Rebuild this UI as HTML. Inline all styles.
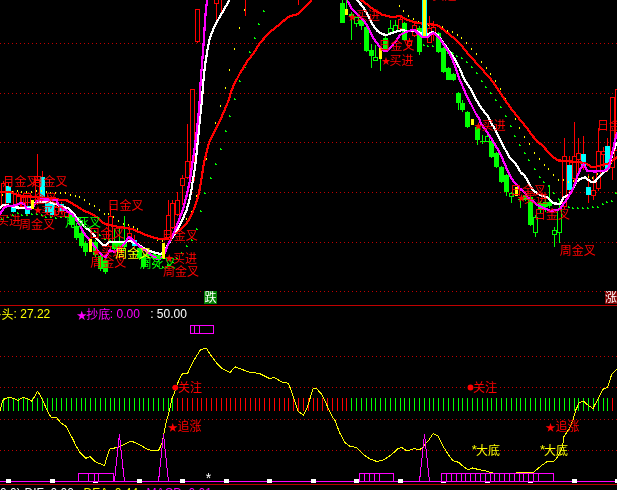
<!DOCTYPE html>
<html lang="zh-CN"><head><meta charset="utf-8"><title>K线图</title>
<style>
html,body{margin:0;padding:0;background:#000;overflow:hidden}
svg{display:block;will-change:transform}
text{white-space:pre}
</style></head>
<body>
<svg width="617" height="490" viewBox="0 0 617 490">
<rect width="617" height="490" fill="#000"/>
<g shape-rendering="crispEdges">
<line x1="0" y1="43.5" x2="362" y2="43.5" stroke="#c00000" stroke-width="1" stroke-dasharray="1 3"/>
<line x1="444" y1="43.5" x2="617" y2="43.5" stroke="#c00000" stroke-width="1" stroke-dasharray="1 3"/>
<line x1="0" y1="93.5" x2="617" y2="93.5" stroke="#c00000" stroke-width="1" stroke-dasharray="1 3"/>
<line x1="0" y1="142.5" x2="617" y2="142.5" stroke="#c00000" stroke-width="1" stroke-dasharray="1 3"/>
<line x1="0" y1="192.5" x2="617" y2="192.5" stroke="#c00000" stroke-width="1" stroke-dasharray="1 3"/>
<line x1="0" y1="242.5" x2="617" y2="242.5" stroke="#c00000" stroke-width="1" stroke-dasharray="1 3"/>
<line x1="0" y1="291.5" x2="617" y2="291.5" stroke="#c00000" stroke-width="1" stroke-dasharray="1 3"/>
<line x1="0" y1="356.5" x2="617" y2="356.5" stroke="#c00000" stroke-width="1" stroke-dasharray="1 3"/>
<line x1="0" y1="387.5" x2="617" y2="387.5" stroke="#c00000" stroke-width="1" stroke-dasharray="1 3"/>
<line x1="0" y1="419.5" x2="617" y2="419.5" stroke="#c00000" stroke-width="1" stroke-dasharray="1 3"/>
<line x1="0" y1="450.5" x2="617" y2="450.5" stroke="#c00000" stroke-width="1" stroke-dasharray="1 3"/>
<rect x="0" y="305" width="617" height="1" fill="#c00000"/>
</g>
<g shape-rendering="crispEdges">
<rect x="3" y="181" width="1" height="2" fill="#ff0000"/>
<rect x="3" y="204" width="1" height="3" fill="#ff0000"/>
<rect x="1.5" y="183.5" width="4" height="21" fill="#000" stroke="#ff0000" stroke-width="1"/>
<rect x="8" y="183" width="1" height="23" fill="#ff0000"/>
<rect x="6" y="186" width="5" height="17" fill="#00ffff"/>
<rect x="13" y="191" width="1" height="22" fill="#ff0000"/>
<rect x="11" y="205" width="5" height="7" fill="#00ffff"/>
<rect x="18" y="192" width="1" height="4" fill="#ff0000"/>
<rect x="18" y="208" width="1" height="2" fill="#ff0000"/>
<rect x="16.5" y="196.5" width="4" height="12" fill="#000" stroke="#ff0000" stroke-width="1"/>
<rect x="23" y="194" width="1" height="3" fill="#ff0000"/>
<rect x="23" y="206" width="1" height="2" fill="#ff0000"/>
<rect x="21.5" y="197.5" width="4" height="9" fill="#000" stroke="#ff0000" stroke-width="1"/>
<rect x="27" y="196" width="1" height="19" fill="#ff0000"/>
<rect x="25" y="206" width="5" height="8" fill="#00ffff"/>
<rect x="37" y="154" width="1" height="26" fill="#ff0000"/>
<rect x="37" y="200" width="1" height="5" fill="#ff0000"/>
<rect x="35.5" y="180.5" width="4" height="20" fill="#000" stroke="#ff0000" stroke-width="1"/>
<rect x="42" y="171" width="1" height="30" fill="#ff0000"/>
<rect x="40" y="177" width="5" height="22" fill="#00ffff"/>
<rect x="47" y="195" width="1" height="20" fill="#ff0000"/>
<rect x="45" y="197" width="5" height="16" fill="#00ffff"/>
<rect x="52" y="200" width="1" height="17" fill="#ff0000"/>
<rect x="50" y="203" width="5" height="12" fill="#00ffff"/>
<rect x="56" y="204" width="1" height="3" fill="#ff0000"/>
<rect x="56" y="214" width="1" height="2" fill="#ff0000"/>
<rect x="54.5" y="207.5" width="4" height="7" fill="#000" stroke="#ff0000" stroke-width="1"/>
<rect x="61" y="202" width="1" height="12" fill="#ff0000"/>
<rect x="59" y="204" width="5" height="8" fill="#00ffff"/>
<rect x="66" y="209" width="1" height="3" fill="#ff0000"/>
<rect x="66" y="216" width="1" height="2" fill="#ff0000"/>
<rect x="64.5" y="212.5" width="4" height="4" fill="#000" stroke="#ff0000" stroke-width="1"/>
<rect x="71" y="212" width="1" height="15" fill="#00ff00"/>
<rect x="69" y="214" width="5" height="11" fill="#00ff00"/>
<rect x="76" y="223" width="1" height="17" fill="#00ff00"/>
<rect x="74" y="226" width="5" height="12" fill="#00ff00"/>
<rect x="81" y="231" width="1" height="17" fill="#00ff00"/>
<rect x="79" y="233" width="5" height="13" fill="#00ff00"/>
<rect x="85" y="241" width="1" height="15" fill="#00ff00"/>
<rect x="83" y="243" width="5" height="9" fill="#00ff00"/>
<rect x="95" y="240" width="1" height="17" fill="#00ff00"/>
<rect x="93" y="242" width="5" height="13" fill="#00ff00"/>
<rect x="100" y="254" width="1" height="17" fill="#00ff00"/>
<rect x="98" y="256" width="5" height="13" fill="#00ff00"/>
<rect x="105" y="257" width="1" height="17" fill="#00ff00"/>
<rect x="103" y="260" width="5" height="12" fill="#00ff00"/>
<rect x="110" y="206" width="1" height="10" fill="#ff0000"/>
<rect x="110" y="246" width="1" height="4" fill="#ff0000"/>
<rect x="108.5" y="216.5" width="4" height="30" fill="#000" stroke="#ff0000" stroke-width="1"/>
<rect x="114" y="229" width="1" height="22" fill="#00ff00"/>
<rect x="112" y="242" width="5" height="7" fill="#00ff00"/>
<rect x="119" y="228" width="1" height="22" fill="#00ff00"/>
<rect x="117" y="242" width="5" height="6" fill="#00ff00"/>
<rect x="124" y="216" width="1" height="33" fill="#00ff00"/>
<rect x="122" y="242" width="5" height="5" fill="#00ff00"/>
<rect x="129" y="226" width="1" height="7" fill="#ff0000"/>
<rect x="129" y="236" width="1" height="4" fill="#ff0000"/>
<rect x="127.5" y="233.5" width="4" height="3" fill="#000" stroke="#ff0000" stroke-width="1"/>
<rect x="134" y="235" width="1" height="13" fill="#ff0000"/>
<rect x="132" y="240" width="5" height="6" fill="#00ffff"/>
<rect x="139" y="246" width="1" height="14" fill="#00ff00"/>
<rect x="137" y="248" width="5" height="10" fill="#00ff00"/>
<rect x="143" y="254" width="1" height="15" fill="#00ff00"/>
<rect x="141" y="256" width="5" height="11" fill="#00ff00"/>
<rect x="148" y="249" width="1" height="9" fill="#00ff00"/>
<rect x="146" y="251" width="5" height="5" fill="#00ff00"/>
<rect x="153" y="252" width="1" height="8" fill="#00ff00"/>
<rect x="151" y="254" width="5" height="4" fill="#00ff00"/>
<rect x="158" y="252" width="1" height="10" fill="#00ff00"/>
<rect x="156" y="255" width="5" height="4" fill="#00ff00"/>
<rect x="168" y="200" width="1" height="15" fill="#ff0000"/>
<rect x="168" y="237" width="1" height="3" fill="#ff0000"/>
<rect x="166.5" y="215.5" width="4" height="22" fill="#000" stroke="#ff0000" stroke-width="1"/>
<rect x="172" y="200" width="1" height="3" fill="#ff0000"/>
<rect x="172" y="227" width="1" height="2" fill="#ff0000"/>
<rect x="170.5" y="203.5" width="4" height="24" fill="#000" stroke="#ff0000" stroke-width="1"/>
<rect x="177" y="192" width="1" height="8" fill="#ff0000"/>
<rect x="177" y="214" width="1" height="2" fill="#ff0000"/>
<rect x="175.5" y="200.5" width="4" height="14" fill="#000" stroke="#ff0000" stroke-width="1"/>
<rect x="182" y="175" width="1" height="3" fill="#ff0000"/>
<rect x="182" y="185" width="1" height="20" fill="#ff0000"/>
<rect x="180.5" y="178.5" width="4" height="7" fill="#000" stroke="#ff0000" stroke-width="1"/>
<rect x="187" y="124" width="1" height="37" fill="#ff0000"/>
<rect x="187" y="177" width="1" height="2" fill="#ff0000"/>
<rect x="185.5" y="161.5" width="4" height="16" fill="#000" stroke="#ff0000" stroke-width="1"/>
<rect x="192" y="180" width="1" height="1" fill="#ff0000"/>
<rect x="190.5" y="89.5" width="4" height="91" fill="#000" stroke="#ff0000" stroke-width="1"/>
<rect x="197" y="41" width="1" height="2" fill="#ff0000"/>
<rect x="195.5" y="9.5" width="4" height="32" fill="#000" stroke="#ff0000" stroke-width="1"/>
<rect x="216" y="3" width="1" height="19" fill="#ff0000"/>
<rect x="214.5" y="-5.5" width="4" height="9" fill="#000" stroke="#ff0000" stroke-width="1"/>
<rect x="221" y="-10" width="1" height="24" fill="#ff0000"/>
<rect x="219.5" y="-19.5" width="4" height="10" fill="#000" stroke="#ff0000" stroke-width="1"/>
<rect x="245" y="-10" width="1" height="26" fill="#ff0000"/>
<rect x="243.5" y="-19.5" width="4" height="10" fill="#000" stroke="#ff0000" stroke-width="1"/>
<rect x="298" y="-10" width="1" height="15" fill="#ff0000"/>
<rect x="296.5" y="-19.5" width="4" height="10" fill="#000" stroke="#ff0000" stroke-width="1"/>
<rect x="342" y="-2" width="1" height="25" fill="#00ff00"/>
<rect x="340" y="3" width="5" height="20" fill="#00ff00"/>
<rect x="351" y="12" width="1" height="28" fill="#00ff00"/>
<rect x="349" y="14" width="5" height="3" fill="#00ff00"/>
<rect x="356" y="17" width="1" height="10" fill="#00ff00"/>
<rect x="354.5" y="17.5" width="4" height="6" fill="#000" stroke="#00ff00" stroke-width="1"/>
<rect x="361" y="16" width="1" height="14" fill="#00ff00"/>
<rect x="359" y="20" width="5" height="6" fill="#00ff00"/>
<rect x="366" y="27" width="1" height="25" fill="#00ff00"/>
<rect x="364" y="27" width="5" height="24" fill="#00ff00"/>
<rect x="371" y="44" width="1" height="24" fill="#00ff00"/>
<rect x="369" y="50" width="5" height="6" fill="#00ff00"/>
<rect x="375" y="45" width="1" height="15" fill="#00ff00"/>
<rect x="373.5" y="57.5" width="4" height="3" fill="#000" stroke="#00ff00" stroke-width="1"/>
<rect x="385" y="36" width="1" height="15" fill="#00ff00"/>
<rect x="383" y="38" width="5" height="11" fill="#00ff00"/>
<rect x="390" y="20" width="1" height="13" fill="#00ff00"/>
<rect x="388.5" y="28.5" width="4" height="4" fill="#000" stroke="#00ff00" stroke-width="1"/>
<rect x="395" y="20" width="1" height="11" fill="#00ff00"/>
<rect x="393.5" y="25.5" width="4" height="6" fill="#000" stroke="#00ff00" stroke-width="1"/>
<rect x="400" y="15" width="1" height="4" fill="#ff0000"/>
<rect x="400" y="28" width="1" height="2" fill="#ff0000"/>
<rect x="398.5" y="19.5" width="4" height="9" fill="#000" stroke="#ff0000" stroke-width="1"/>
<rect x="404" y="22" width="1" height="19" fill="#00ff00"/>
<rect x="402" y="23" width="5" height="17" fill="#00ff00"/>
<rect x="409" y="38" width="1" height="3" fill="#ff0000"/>
<rect x="409" y="45" width="1" height="2" fill="#ff0000"/>
<rect x="407.5" y="41.5" width="4" height="4" fill="#000" stroke="#ff0000" stroke-width="1"/>
<rect x="414" y="22" width="1" height="3" fill="#ff0000"/>
<rect x="414" y="35" width="1" height="2" fill="#ff0000"/>
<rect x="412.5" y="25.5" width="4" height="10" fill="#000" stroke="#ff0000" stroke-width="1"/>
<rect x="419" y="26" width="1" height="29" fill="#00ff00"/>
<rect x="417" y="28" width="5" height="24" fill="#00ff00"/>
<rect x="429" y="16" width="1" height="12" fill="#ff0000"/>
<rect x="429" y="42" width="1" height="1" fill="#ff0000"/>
<rect x="427.5" y="28.5" width="4" height="14" fill="#000" stroke="#ff0000" stroke-width="1"/>
<rect x="433" y="21" width="1" height="6" fill="#ff0000"/>
<rect x="433" y="32" width="1" height="9" fill="#ff0000"/>
<rect x="431.5" y="27.5" width="4" height="5" fill="#000" stroke="#ff0000" stroke-width="1"/>
<rect x="438" y="32" width="1" height="21" fill="#00ff00"/>
<rect x="436" y="33" width="5" height="19" fill="#00ff00"/>
<rect x="443" y="47" width="1" height="26" fill="#00ff00"/>
<rect x="441" y="48" width="5" height="24" fill="#00ff00"/>
<rect x="448" y="67" width="1" height="13" fill="#00ff00"/>
<rect x="446" y="68" width="5" height="12" fill="#00ff00"/>
<rect x="453" y="73" width="1" height="8" fill="#00ff00"/>
<rect x="451" y="74" width="5" height="6" fill="#00ff00"/>
<rect x="458" y="92" width="1" height="18" fill="#00ff00"/>
<rect x="456" y="93" width="5" height="10" fill="#00ff00"/>
<rect x="462" y="100" width="1" height="12" fill="#00ff00"/>
<rect x="460" y="103" width="5" height="7" fill="#00ff00"/>
<rect x="467" y="111" width="1" height="17" fill="#00ff00"/>
<rect x="465" y="112" width="5" height="15" fill="#00ff00"/>
<rect x="477" y="126" width="1" height="19" fill="#00ff00"/>
<rect x="475" y="127" width="5" height="13" fill="#00ff00"/>
<rect x="482" y="135" width="1" height="9" fill="#00ff00"/>
<rect x="480" y="141" width="5" height="1" fill="#00ff00"/>
<rect x="487" y="135" width="1" height="7" fill="#00ff00"/>
<rect x="485.5" y="136.5" width="4" height="5" fill="#000" stroke="#00ff00" stroke-width="1"/>
<rect x="491" y="140" width="1" height="18" fill="#00ff00"/>
<rect x="489" y="141" width="5" height="16" fill="#00ff00"/>
<rect x="496" y="152" width="1" height="16" fill="#00ff00"/>
<rect x="494" y="153" width="5" height="14" fill="#00ff00"/>
<rect x="501" y="166" width="1" height="17" fill="#00ff00"/>
<rect x="499" y="167" width="5" height="15" fill="#00ff00"/>
<rect x="506" y="174" width="1" height="22" fill="#00ff00"/>
<rect x="504" y="175" width="5" height="17" fill="#00ff00"/>
<rect x="511" y="192" width="1" height="11" fill="#00ff00"/>
<rect x="509.5" y="193.5" width="4" height="3" fill="#000" stroke="#00ff00" stroke-width="1"/>
<rect x="520" y="198" width="1" height="10" fill="#00ff00"/>
<rect x="518" y="199" width="5" height="1" fill="#00ff00"/>
<rect x="525" y="194" width="1" height="7" fill="#00ff00"/>
<rect x="523" y="195" width="5" height="5" fill="#00ff00"/>
<rect x="530" y="196" width="1" height="30" fill="#00ff00"/>
<rect x="528" y="197" width="5" height="28" fill="#00ff00"/>
<rect x="535" y="215" width="1" height="22" fill="#00ff00"/>
<rect x="533.5" y="217.5" width="4" height="15" fill="#000" stroke="#00ff00" stroke-width="1"/>
<rect x="540" y="201" width="1" height="12" fill="#00ff00"/>
<rect x="538" y="203" width="5" height="6" fill="#00ff00"/>
<rect x="545" y="198" width="1" height="14" fill="#00ff00"/>
<rect x="543" y="202" width="5" height="5" fill="#00ff00"/>
<rect x="549" y="185" width="1" height="23" fill="#00ff00"/>
<rect x="547" y="202" width="5" height="4" fill="#00ff00"/>
<rect x="554" y="227" width="1" height="20" fill="#00ff00"/>
<rect x="552.5" y="230.5" width="4" height="4" fill="#000" stroke="#00ff00" stroke-width="1"/>
<rect x="559" y="199" width="1" height="44" fill="#00ff00"/>
<rect x="557.5" y="209.5" width="4" height="23" fill="#000" stroke="#00ff00" stroke-width="1"/>
<rect x="564" y="138" width="1" height="18" fill="#ff0000"/>
<rect x="564" y="206" width="1" height="3" fill="#ff0000"/>
<rect x="562.5" y="156.5" width="4" height="50" fill="#000" stroke="#ff0000" stroke-width="1"/>
<rect x="569" y="156" width="1" height="37" fill="#ff0000"/>
<rect x="567" y="165" width="5" height="25" fill="#00ffff"/>
<rect x="574" y="122" width="1" height="34" fill="#ff0000"/>
<rect x="574" y="178" width="1" height="7" fill="#ff0000"/>
<rect x="572.5" y="156.5" width="4" height="22" fill="#000" stroke="#ff0000" stroke-width="1"/>
<rect x="578" y="138" width="1" height="15" fill="#ff0000"/>
<rect x="578" y="159" width="1" height="13" fill="#ff0000"/>
<rect x="576.5" y="153.5" width="4" height="6" fill="#000" stroke="#ff0000" stroke-width="1"/>
<rect x="583" y="136" width="1" height="34" fill="#ff0000"/>
<rect x="581" y="154" width="5" height="12" fill="#00ffff"/>
<rect x="588" y="174" width="1" height="29" fill="#ff0000"/>
<rect x="586" y="187" width="5" height="8" fill="#00ffff"/>
<rect x="593" y="176" width="1" height="14" fill="#ff0000"/>
<rect x="593" y="195" width="1" height="5" fill="#ff0000"/>
<rect x="591.5" y="190.5" width="4" height="5" fill="#000" stroke="#ff0000" stroke-width="1"/>
<rect x="598" y="128" width="1" height="23" fill="#ff0000"/>
<rect x="598" y="188" width="1" height="3" fill="#ff0000"/>
<rect x="596.5" y="151.5" width="4" height="37" fill="#000" stroke="#ff0000" stroke-width="1"/>
<rect x="603" y="147" width="1" height="4" fill="#ff0000"/>
<rect x="603" y="154" width="1" height="13" fill="#ff0000"/>
<rect x="601.5" y="151.5" width="4" height="3" fill="#000" stroke="#ff0000" stroke-width="1"/>
<rect x="607" y="138" width="1" height="34" fill="#ff0000"/>
<rect x="605" y="146" width="5" height="23" fill="#00ffff"/>
<rect x="612" y="167" width="1" height="13" fill="#ff0000"/>
<rect x="610.5" y="97.5" width="4" height="70" fill="#000" stroke="#ff0000" stroke-width="1"/>
<rect x="615.5" y="89.5" width="4" height="61" fill="#000" stroke="#ff0000" stroke-width="1"/>
</g>
<g shape-rendering="crispEdges">
<rect x="2" y="194" width="1" height="2" fill="#ffff00"/>
<rect x="7" y="192" width="1" height="2" fill="#ffff00"/>
<rect x="12" y="191" width="1" height="2" fill="#ffff00"/>
<rect x="17" y="190" width="1" height="2" fill="#ffff00"/>
<rect x="21" y="191" width="1" height="2" fill="#ffff00"/>
<rect x="26" y="191" width="1" height="2" fill="#ffff00"/>
<rect x="31" y="191" width="1" height="2" fill="#ffff00"/>
<rect x="36" y="190" width="1" height="2" fill="#ffff00"/>
<rect x="41" y="190" width="1" height="2" fill="#ffff00"/>
<rect x="46" y="191" width="1" height="2" fill="#ffff00"/>
<rect x="50" y="192" width="1" height="2" fill="#ffff00"/>
<rect x="55" y="192" width="1" height="2" fill="#ffff00"/>
<rect x="60" y="192" width="1" height="2" fill="#ffff00"/>
<rect x="65" y="192" width="1" height="2" fill="#ffff00"/>
<rect x="70" y="194" width="1" height="2" fill="#ffff00"/>
<rect x="75" y="195" width="1" height="2" fill="#ffff00"/>
<rect x="79" y="196" width="1" height="2" fill="#ffff00"/>
<rect x="84" y="199" width="1" height="2" fill="#ffff00"/>
<rect x="89" y="203" width="1" height="2" fill="#ffff00"/>
<rect x="94" y="205" width="1" height="2" fill="#ffff00"/>
<rect x="99" y="209" width="1" height="2" fill="#ffff00"/>
<rect x="104" y="213" width="1" height="2" fill="#ffff00"/>
<rect x="108" y="213" width="1" height="2" fill="#ffff00"/>
<rect x="113" y="216" width="1" height="2" fill="#ffff00"/>
<rect x="118" y="220" width="1" height="2" fill="#ffff00"/>
<rect x="123" y="223" width="1" height="2" fill="#ffff00"/>
<rect x="128" y="224" width="1" height="2" fill="#ffff00"/>
<rect x="133" y="226" width="1" height="2" fill="#ffff00"/>
<rect x="137" y="228" width="1" height="2" fill="#ffff00"/>
<rect x="142" y="232" width="1" height="2" fill="#ffff00"/>
<rect x="147" y="235" width="1" height="2" fill="#ffff00"/>
<rect x="153" y="237" width="1" height="2" fill="#ffff00"/>
<rect x="157" y="239" width="1" height="2" fill="#ffff00"/>
<rect x="162" y="240" width="1" height="2" fill="#ffff00"/>
<rect x="167" y="237" width="1" height="2" fill="#ffff00"/>
<rect x="172" y="234" width="1" height="2" fill="#ffff00"/>
<rect x="177" y="230" width="1" height="2" fill="#ffff00"/>
<rect x="181" y="227" width="1" height="2" fill="#ffff00"/>
<rect x="186" y="218" width="1" height="2" fill="#ffff00"/>
<rect x="191" y="211" width="1" height="2" fill="#ffff00"/>
<rect x="196" y="195" width="1" height="2" fill="#ffff00"/>
<rect x="201" y="177" width="1" height="2" fill="#ffff00"/>
<rect x="206" y="158" width="1" height="2" fill="#ffff00"/>
<rect x="210" y="139" width="1" height="2" fill="#ffff00"/>
<rect x="215" y="122" width="1" height="2" fill="#ffff00"/>
<rect x="220" y="105" width="1" height="2" fill="#ffff00"/>
<rect x="225" y="87" width="1" height="2" fill="#ffff00"/>
<rect x="229" y="69" width="1" height="2" fill="#ffff00"/>
<rect x="234" y="48" width="1" height="2" fill="#ffff00"/>
<rect x="239" y="27" width="1" height="2" fill="#ffff00"/>
<rect x="244" y="9" width="1" height="2" fill="#ffff00"/>
<rect x="399" y="5" width="1" height="2" fill="#ffff00"/>
<rect x="403" y="10" width="1" height="2" fill="#ffff00"/>
<rect x="408" y="15" width="1" height="2" fill="#ffff00"/>
<rect x="413" y="18" width="1" height="2" fill="#ffff00"/>
<rect x="418" y="21" width="1" height="2" fill="#ffff00"/>
<rect x="423" y="23" width="1" height="2" fill="#ffff00"/>
<rect x="428" y="24" width="1" height="2" fill="#ffff00"/>
<rect x="433" y="24" width="1" height="2" fill="#ffff00"/>
<rect x="438" y="25" width="1" height="2" fill="#ffff00"/>
<rect x="442" y="26" width="1" height="2" fill="#ffff00"/>
<rect x="447" y="30" width="1" height="2" fill="#ffff00"/>
<rect x="452" y="31" width="1" height="2" fill="#ffff00"/>
<rect x="457" y="34" width="1" height="2" fill="#ffff00"/>
<rect x="461" y="37" width="1" height="2" fill="#ffff00"/>
<rect x="466" y="42" width="1" height="2" fill="#ffff00"/>
<rect x="471" y="48" width="1" height="2" fill="#ffff00"/>
<rect x="476" y="53" width="1" height="2" fill="#ffff00"/>
<rect x="481" y="61" width="1" height="2" fill="#ffff00"/>
<rect x="486" y="67" width="1" height="2" fill="#ffff00"/>
<rect x="490" y="73" width="1" height="2" fill="#ffff00"/>
<rect x="495" y="80" width="1" height="2" fill="#ffff00"/>
<rect x="500" y="88" width="1" height="2" fill="#ffff00"/>
<rect x="505" y="98" width="1" height="2" fill="#ffff00"/>
<rect x="510" y="108" width="1" height="2" fill="#ffff00"/>
<rect x="515" y="118" width="1" height="2" fill="#ffff00"/>
<rect x="519" y="127" width="1" height="2" fill="#ffff00"/>
<rect x="524" y="136" width="1" height="2" fill="#ffff00"/>
<rect x="529" y="143" width="1" height="2" fill="#ffff00"/>
<rect x="534" y="152" width="1" height="2" fill="#ffff00"/>
<rect x="539" y="158" width="1" height="2" fill="#ffff00"/>
<rect x="544" y="164" width="1" height="2" fill="#ffff00"/>
<rect x="548" y="168" width="1" height="2" fill="#ffff00"/>
<rect x="553" y="174" width="1" height="2" fill="#ffff00"/>
<rect x="558" y="179" width="1" height="2" fill="#ffff00"/>
<rect x="563" y="179" width="1" height="2" fill="#ffff00"/>
<rect x="568" y="181" width="1" height="2" fill="#ffff00"/>
<rect x="573" y="180" width="1" height="2" fill="#ffff00"/>
<rect x="578" y="178" width="1" height="2" fill="#ffff00"/>
<rect x="583" y="177" width="1" height="2" fill="#ffff00"/>
<rect x="588" y="176" width="1" height="2" fill="#ffff00"/>
<rect x="592" y="177" width="1" height="2" fill="#ffff00"/>
<rect x="597" y="173" width="1" height="2" fill="#ffff00"/>
<rect x="602" y="170" width="1" height="2" fill="#ffff00"/>
<rect x="606" y="168" width="1" height="2" fill="#ffff00"/>
<rect x="611" y="162" width="1" height="2" fill="#ffff00"/>
<rect x="616" y="156" width="1" height="2" fill="#ffff00"/>
<path d="M1 218h1v1h1v1h-2z" fill="#00ff00"/>
<path d="M7 216h1v1h1v1h-2z" fill="#00ff00"/>
<path d="M12 214h1v1h1v1h-2z" fill="#00ff00"/>
<path d="M17 212h1v1h1v1h-2z" fill="#00ff00"/>
<path d="M21 214h1v1h1v1h-2z" fill="#00ff00"/>
<path d="M26 214h1v1h1v1h-2z" fill="#00ff00"/>
<path d="M31 213h1v1h1v1h-2z" fill="#00ff00"/>
<path d="M36 213h1v1h1v1h-2z" fill="#00ff00"/>
<path d="M41 214h1v1h1v1h-2z" fill="#00ff00"/>
<path d="M45 216h1v1h1v1h-2z" fill="#00ff00"/>
<path d="M50 216h1v1h1v1h-2z" fill="#00ff00"/>
<path d="M55 217h1v1h1v1h-2z" fill="#00ff00"/>
<path d="M60 216h1v1h1v1h-2z" fill="#00ff00"/>
<path d="M65 216h1v1h1v1h-2z" fill="#00ff00"/>
<path d="M70 217h1v1h1v1h-2z" fill="#00ff00"/>
<path d="M75 218h1v1h1v1h-2z" fill="#00ff00"/>
<path d="M80 220h1v1h1v1h-2z" fill="#00ff00"/>
<path d="M85 223h1v1h1v1h-2z" fill="#00ff00"/>
<path d="M89 227h1v1h1v1h-2z" fill="#00ff00"/>
<path d="M94 230h1v1h1v1h-2z" fill="#00ff00"/>
<path d="M99 234h1v1h1v1h-2z" fill="#00ff00"/>
<path d="M104 238h1v1h1v1h-2z" fill="#00ff00"/>
<path d="M109 239h1v1h1v1h-2z" fill="#00ff00"/>
<path d="M114 242h1v1h1v1h-2z" fill="#00ff00"/>
<path d="M118 246h1v1h1v1h-2z" fill="#00ff00"/>
<path d="M123 249h1v1h1v1h-2z" fill="#00ff00"/>
<path d="M128 250h1v1h1v1h-2z" fill="#00ff00"/>
<path d="M133 252h1v1h1v1h-2z" fill="#00ff00"/>
<path d="M138 254h1v1h1v1h-2z" fill="#00ff00"/>
<path d="M143 258h1v1h1v1h-2z" fill="#00ff00"/>
<path d="M147 261h1v1h1v1h-2z" fill="#00ff00"/>
<path d="M152 263h1v1h1v1h-2z" fill="#00ff00"/>
<path d="M157 265h1v1h1v1h-2z" fill="#00ff00"/>
<path d="M162 266h1v1h1v1h-2z" fill="#00ff00"/>
<path d="M167 264h1v1h1v1h-2z" fill="#00ff00"/>
<path d="M172 261h1v1h1v1h-2z" fill="#00ff00"/>
<path d="M176 257h1v1h1v1h-2z" fill="#00ff00"/>
<path d="M181 252h1v1h1v1h-2z" fill="#00ff00"/>
<path d="M186 245h1v1h1v1h-2z" fill="#00ff00"/>
<path d="M191 239h1v1h1v1h-2z" fill="#00ff00"/>
<path d="M196 228h1v1h1v1h-2z" fill="#00ff00"/>
<path d="M200 210h1v1h1v1h-2z" fill="#00ff00"/>
<path d="M204 192h1v1h1v1h-2z" fill="#00ff00"/>
<path d="M210 177h1v1h1v1h-2z" fill="#00ff00"/>
<path d="M215 163h1v1h1v1h-2z" fill="#00ff00"/>
<path d="M220 148h1v1h1v1h-2z" fill="#00ff00"/>
<path d="M225 130h1v1h1v1h-2z" fill="#00ff00"/>
<path d="M229 115h1v1h1v1h-2z" fill="#00ff00"/>
<path d="M234 98h1v1h1v1h-2z" fill="#00ff00"/>
<path d="M239 80h1v1h1v1h-2z" fill="#00ff00"/>
<path d="M244 66h1v1h1v1h-2z" fill="#00ff00"/>
<path d="M249 51h1v1h1v1h-2z" fill="#00ff00"/>
<path d="M254 37h1v1h1v1h-2z" fill="#00ff00"/>
<path d="M258 23h1v1h1v1h-2z" fill="#00ff00"/>
<path d="M263 10h1v1h1v1h-2z" fill="#00ff00"/>
<path d="M423 44h1v1h1v1h-2z" fill="#00ff00"/>
<path d="M427 45h1v1h1v1h-2z" fill="#00ff00"/>
<path d="M432 45h1v1h1v1h-2z" fill="#00ff00"/>
<path d="M437 47h1v1h1v1h-2z" fill="#00ff00"/>
<path d="M442 49h1v1h1v1h-2z" fill="#00ff00"/>
<path d="M447 52h1v1h1v1h-2z" fill="#00ff00"/>
<path d="M452 52h1v1h1v1h-2z" fill="#00ff00"/>
<path d="M456 55h1v1h1v1h-2z" fill="#00ff00"/>
<path d="M461 57h1v1h1v1h-2z" fill="#00ff00"/>
<path d="M466 61h1v1h1v1h-2z" fill="#00ff00"/>
<path d="M471 66h1v1h1v1h-2z" fill="#00ff00"/>
<path d="M476 72h1v1h1v1h-2z" fill="#00ff00"/>
<path d="M481 80h1v1h1v1h-2z" fill="#00ff00"/>
<path d="M485 86h1v1h1v1h-2z" fill="#00ff00"/>
<path d="M490 92h1v1h1v1h-2z" fill="#00ff00"/>
<path d="M495 99h1v1h1v1h-2z" fill="#00ff00"/>
<path d="M500 106h1v1h1v1h-2z" fill="#00ff00"/>
<path d="M505 115h1v1h1v1h-2z" fill="#00ff00"/>
<path d="M510 125h1v1h1v1h-2z" fill="#00ff00"/>
<path d="M514 135h1v1h1v1h-2z" fill="#00ff00"/>
<path d="M519 144h1v1h1v1h-2z" fill="#00ff00"/>
<path d="M524 152h1v1h1v1h-2z" fill="#00ff00"/>
<path d="M528 159h1v1h1v1h-2z" fill="#00ff00"/>
<path d="M534 168h1v1h1v1h-2z" fill="#00ff00"/>
<path d="M539 176h1v1h1v1h-2z" fill="#00ff00"/>
<path d="M543 181h1v1h1v1h-2z" fill="#00ff00"/>
<path d="M548 185h1v1h1v1h-2z" fill="#00ff00"/>
<path d="M553 192h1v1h1v1h-2z" fill="#00ff00"/>
<path d="M558 198h1v1h1v1h-2z" fill="#00ff00"/>
<path d="M563 202h1v1h1v1h-2z" fill="#00ff00"/>
<path d="M568 206h1v1h1v1h-2z" fill="#00ff00"/>
<path d="M572 207h1v1h1v1h-2z" fill="#00ff00"/>
<path d="M577 207h1v1h1v1h-2z" fill="#00ff00"/>
<path d="M582 207h1v1h1v1h-2z" fill="#00ff00"/>
<path d="M587 207h1v1h1v1h-2z" fill="#00ff00"/>
<path d="M592 206h1v1h1v1h-2z" fill="#00ff00"/>
<path d="M597 206h1v1h1v1h-2z" fill="#00ff00"/>
<path d="M602 203h1v1h1v1h-2z" fill="#00ff00"/>
<path d="M606 201h1v1h1v1h-2z" fill="#00ff00"/>
<path d="M611 200h1v1h1v1h-2z" fill="#00ff00"/>
<path d="M615 192h1v1h1v1h-2z" fill="#00ff00"/>
</g>
<polyline points="0.0,192.0 11.0,192.3 14.0,193.5 18.0,195.3 24.0,196.0 32.0,196.6 40.0,198.0 55.0,198.5 60.0,199.9 67.4,200.5 72.3,203.6 78.4,207.3 84.5,211.0 90.6,213.4 96.8,217.0 101.7,222.0 106.6,224.4 115.0,226.3 123.7,227.5 132.4,229.2 139.7,232.3 147.0,235.5 152.0,237.0 157.0,238.5 163.0,239.0 168.0,238.0 172.0,236.0 176.0,232.8 180.0,230.0 183.0,226.8 186.3,223.5 189.2,219.2 193.0,211.4 196.4,202.2 199.0,193.0 201.3,180.0 203.5,165.4 206.0,154.0 209.2,142.5 214.0,132.7 219.0,122.9 224.0,111.4 228.8,100.0 230.3,94.1 234.3,83.5 237.0,79.0 240.0,73.0 243.0,68.5 246.7,62.0 251.7,55.6 255.0,51.3 258.3,45.5 260.5,42.3 264.8,37.6 271.3,31.0 279.5,24.5 287.7,17.2 292.6,15.5 298.3,13.9 304.0,8.2 309.0,3.3 311.4,0.0 314.0,-4.0 358.0,-4.0 361.0,0.0 367.6,4.9 374.0,9.8 382.3,14.7 392.0,17.2 400.2,16.0 407.5,20.0 415.5,22.4 423.7,24.0 432.7,24.5 437.6,25.3 444.0,30.2 452.3,36.8 460.5,44.0 465.4,50.7 472.0,58.0 478.0,65.0 481.9,68.5 484.3,72.0 490.3,78.5 498.1,89.4 504.5,99.2 511.3,109.0 518.6,118.0 526.0,126.8 531.8,135.0 538.6,142.9 542.0,145.0 548.0,151.9 554.3,158.0 558.0,160.4 566.5,161.0 578.8,162.3 585.0,162.9 591.0,166.6 596.0,166.6 603.3,164.7 608.2,163.5 613.0,160.4 617.0,156.8" fill="none" stroke="#ff0000" stroke-width="2.2" stroke-linejoin="round" shape-rendering="crispEdges"/>
<polyline points="0.0,208.5 1.6,206.3 4.0,204.9 8.1,205.4 15.4,207.4 24.3,208.0 30.0,207.6 34.8,203.3 37.3,201.6 40.5,201.8 50.0,202.3 52.7,203.4 57.0,204.0 58.8,205.8 62.0,206.5 67.4,207.9 72.3,212.2 78.4,219.5 84.5,226.3 90.6,231.8 96.8,238.5 101.7,244.0 105.5,245.7 109.2,242.2 125.4,242.2 127.9,240.5 131.0,241.5 136.5,243.5 143.5,248.0 149.5,250.8 155.6,253.0 160.5,254.0 163.5,252.5 166.7,247.5 170.0,241.2 176.0,232.0 181.8,221.0 186.6,210.0 189.2,201.0 191.8,187.8 192.9,180.0 195.3,165.4 197.0,149.0 198.6,132.7 200.2,116.3 201.9,100.0 203.5,80.0 205.0,65.4 207.6,49.0 210.0,37.6 214.0,27.8 219.0,18.0 224.0,9.8 228.8,0.8 231.0,-4.0 355.0,-4.0 357.0,0.0 362.7,6.5 367.6,14.7 372.5,24.5 377.4,31.0 382.3,34.3 387.2,34.8 395.4,31.9 401.9,30.2 408.4,31.0 415.0,30.5 421.3,33.5 426.0,35.0 429.5,33.5 432.7,31.9 437.6,35.0 442.5,41.7 449.0,50.7 455.6,60.3 459.6,68.2 464.5,79.8 471.0,89.4 476.0,99.2 480.8,107.4 487.4,115.6 489.6,120.0 492.3,125.4 494.5,128.2 497.2,133.5 499.4,138.0 504.3,147.8 509.2,156.8 515.8,164.0 520.7,172.3 524.5,175.7 527.2,179.6 529.4,184.7 532.0,188.6 534.3,191.2 538.6,194.3 540.8,195.3 546.8,197.2 551.8,201.7 554.3,203.5 560.4,203.8 563.4,197.5 569.0,194.9 572.6,189.4 576.3,182.0 582.4,177.8 585.0,177.4 591.0,181.7 594.7,182.0 599.6,176.0 603.3,172.7 608.2,169.0 613.0,152.0 617.0,142.0" fill="none" stroke="#ffffff" stroke-width="2.2" stroke-linejoin="round" shape-rendering="crispEdges"/>
<polyline points="0.0,214.5 1.6,211.2 4.9,207.2 8.1,206.0 14.6,205.5 18.6,204.0 21.9,202.7 24.3,204.7 26.7,208.6 30.8,209.0 34.0,205.5 36.5,201.5 40.5,199.5 56.4,199.7 58.8,205.0 61.0,207.5 66.0,210.3 72.3,214.5 78.4,223.0 84.5,234.0 90.6,241.4 96.8,249.5 102.0,255.5 105.8,256.9 109.0,252.0 109.5,250.0 114.4,252.0 118.8,249.0 123.7,244.0 125.4,242.2 127.4,238.5 129.3,237.0 131.0,238.5 133.6,240.8 139.7,246.5 145.8,251.0 152.0,255.5 156.9,258.6 160.5,258.6 163.0,256.5 165.4,252.0 167.5,246.0 170.3,240.0 173.7,233.0 178.9,220.3 182.7,210.0 186.0,198.3 188.6,186.5 190.0,180.0 192.0,165.4 194.5,149.0 196.0,137.6 197.5,124.5 199.0,109.8 199.7,100.0 200.7,80.0 201.9,65.4 203.2,49.0 204.3,32.7 205.0,19.6 206.3,6.5 207.3,0.0 208.0,-4.0 345.0,-4.0 347.0,0.0 351.2,8.2 357.8,14.7 364.3,21.2 369.2,29.4 374.0,39.2 379.0,45.8 384.0,50.7 387.2,50.7 392.0,45.8 398.6,37.6 400.0,35.0 405.0,32.5 411.7,30.2 414.7,30.2 418.0,33.5 422.9,37.3 427.8,36.8 433.5,32.7 439.2,37.6 444.0,45.0 449.0,52.3 452.7,60.0 456.3,69.8 459.2,79.0 461.2,82.9 466.0,94.3 471.0,104.0 476.0,114.0 479.8,120.0 480.8,123.7 485.8,130.3 490.7,137.6 492.9,141.2 497.8,149.4 502.7,159.2 507.5,170.5 512.5,180.0 519.3,188.0 525.6,193.5 527.8,197.8 530.5,199.2 536.0,204.3 544.0,208.4 550.7,210.8 557.2,210.0 560.4,209.0 562.0,206.0 566.5,200.0 572.0,190.5 575.2,183.0 577.5,176.0 578.8,172.7 581.2,167.4 583.7,164.5 587.3,171.2 596.0,171.5 603.3,170.9 608.2,169.0 609.4,165.0 610.6,159.2 613.0,149.4 615.5,138.4 617.0,132.0" fill="none" stroke="#ff00ff" stroke-width="2.2" stroke-linejoin="round" shape-rendering="crispEdges"/>
<g shape-rendering="crispEdges">
<rect x="31" y="200" width="3" height="9" fill="#ffff00"/>
<rect x="89" y="239" width="3" height="13" fill="#ffff00"/>
<rect x="162" y="243" width="3" height="16" fill="#ffff00"/>
<rect x="346" y="-2" width="1" height="11" fill="#00ff00"/>
<rect x="345" y="9" width="3" height="6" fill="#ffff00"/>
<rect x="380" y="48" width="1" height="23" fill="#00ff00"/>
<rect x="379" y="48" width="3" height="11" fill="#ffff00"/>
<rect x="471" y="119" width="3" height="6" fill="#ffff00"/>
<rect x="515" y="187" width="3" height="9" fill="#ffff00"/>
<rect x="422" y="-2" width="5" height="38" fill="#00ffff"/><rect x="423" y="-2" width="3" height="38" fill="#ffff00"/>
</g>
<text x="432.5" y="-0.1" fill="#ff0000" font-size="12" font-family="'Liberation Sans','Noto Sans CJK SC',sans-serif">买进</text>
<text x="-3.0" y="225.2" fill="#ff0000" font-size="12" font-family="'Liberation Sans','Noto Sans CJK SC',sans-serif">买进</text>
<text x="2.5" y="185.5" fill="#ff0000" font-size="12" font-family="'Liberation Sans','Noto Sans CJK SC',sans-serif">月金叉</text>
<text x="31.5" y="185.5" fill="#ff0000" font-size="12" font-family="'Liberation Sans','Noto Sans CJK SC',sans-serif">月金叉</text>
<text x="21.0" y="202.7" fill="#ff0000" font-size="12" font-family="'Liberation Sans','Noto Sans CJK SC',sans-serif">日金叉</text>
<text x="33.4" y="213.0" fill="#ff0000" font-size="9" font-family="'Liberation Sans','Noto Sans CJK SC',sans-serif">★</text>
<text x="41.0" y="215.5" fill="#ff0000" font-size="12" font-family="'Liberation Sans','Noto Sans CJK SC',sans-serif">买进</text>
<text x="19.0" y="229.1" fill="#ff0000" font-size="12" font-family="'Liberation Sans','Noto Sans CJK SC',sans-serif">周金叉</text>
<text x="65.0" y="226.5" fill="#00ff00" font-size="12" font-family="'Liberation Sans','Noto Sans CJK SC',sans-serif">月死叉</text>
<text x="107.5" y="209.5" fill="#ff0000" font-size="12" font-family="'Liberation Sans','Noto Sans CJK SC',sans-serif">日金叉</text>
<text x="88.5" y="237.5" fill="#ff0000" font-size="12" font-family="'Liberation Sans','Noto Sans CJK SC',sans-serif">日金叉</text>
<text x="92.0" y="255.2" fill="#ff0000" font-size="9" font-family="'Liberation Sans','Noto Sans CJK SC',sans-serif">★</text>
<text x="100.5" y="256.3" fill="#ff0000" font-size="12" font-family="'Liberation Sans','Noto Sans CJK SC',sans-serif">买进</text>
<text x="90.2" y="267.0" fill="#ff0000" font-size="12" font-family="'Liberation Sans','Noto Sans CJK SC',sans-serif">周金叉</text>
<text x="115.2" y="258.0" fill="#ffff00" font-size="12" font-family="'Liberation Sans','Noto Sans CJK SC',sans-serif">周金叉</text>
<text x="139.7" y="268.0" fill="#00ff00" font-size="12" font-family="'Liberation Sans','Noto Sans CJK SC',sans-serif">周死叉</text>
<text x="161.8" y="240.3" fill="#ff0000" font-size="12" font-family="'Liberation Sans','Noto Sans CJK SC',sans-serif">日金叉</text>
<text x="164.7" y="261.4" fill="#ff0000" font-size="9" font-family="'Liberation Sans','Noto Sans CJK SC',sans-serif">★</text>
<text x="173.0" y="262.5" fill="#ff0000" font-size="12" font-family="'Liberation Sans','Noto Sans CJK SC',sans-serif">买进</text>
<text x="163.0" y="276.0" fill="#ff0000" font-size="12" font-family="'Liberation Sans','Noto Sans CJK SC',sans-serif">周金叉</text>
<text x="347.8" y="19.9" fill="#ff0000" font-size="9" font-family="'Liberation Sans','Noto Sans CJK SC',sans-serif">★</text>
<text x="356.0" y="20.3" fill="#ff0000" font-size="12" font-family="'Liberation Sans','Noto Sans CJK SC',sans-serif">买进</text>
<text x="378.6" y="49.7" fill="#ff0000" font-size="12" font-family="'Liberation Sans','Noto Sans CJK SC',sans-serif">日金叉</text>
<text x="381.6" y="64.2" fill="#ff0000" font-size="9" font-family="'Liberation Sans','Noto Sans CJK SC',sans-serif">★</text>
<text x="389.5" y="65.2" fill="#ff0000" font-size="12" font-family="'Liberation Sans','Noto Sans CJK SC',sans-serif">买进</text>
<text x="474.0" y="129.2" fill="#ff0000" font-size="9" font-family="'Liberation Sans','Noto Sans CJK SC',sans-serif">★</text>
<text x="481.8" y="130.1" fill="#ff0000" font-size="12" font-family="'Liberation Sans','Noto Sans CJK SC',sans-serif">买进</text>
<text x="510.0" y="195.0" fill="#ff0000" font-size="12" font-family="'Liberation Sans','Noto Sans CJK SC',sans-serif">日金叉</text>
<text x="517.0" y="200.7" fill="#ff0000" font-size="9" font-family="'Liberation Sans','Noto Sans CJK SC',sans-serif">★</text>
<text x="524.0" y="202.5" fill="#ff0000" font-size="12" font-family="'Liberation Sans','Noto Sans CJK SC',sans-serif">买进</text>
<text x="534.0" y="218.5" fill="#ff0000" font-size="12" font-family="'Liberation Sans','Noto Sans CJK SC',sans-serif">日金叉</text>
<text x="559.7" y="255.0" fill="#ff0000" font-size="12" font-family="'Liberation Sans','Noto Sans CJK SC',sans-serif">周金叉</text>
<text x="597.0" y="130.0" fill="#ff0000" font-size="12" font-family="'Liberation Sans','Noto Sans CJK SC',sans-serif">日金叉</text>
<rect x="204" y="291" width="13" height="13" fill="#008000" shape-rendering="crispEdges"/>
<text x="204.5" y="302.1" fill="#ffffff" font-size="12" font-family="'Liberation Sans','Noto Sans CJK SC',sans-serif">跌</text>
<rect x="605" y="291" width="13" height="13" fill="#800000" shape-rendering="crispEdges"/>
<text x="605.0" y="302.1" fill="#ffffff" font-size="12" font-family="'Liberation Sans','Noto Sans CJK SC',sans-serif">涨</text>
<text x="-10.5" y="319.2" fill="#ffff00" font-size="12" font-family="'Liberation Sans','Noto Sans CJK SC',sans-serif">多头</text>
<text x="13.6" y="318.3" fill="#ffff00" font-size="12" font-family="'Liberation Sans','Noto Sans CJK SC',sans-serif">: 27.22</text>
<text x="76.4" y="318.7" fill="#ff00ff" font-size="10.5" font-family="'Liberation Sans','Noto Sans CJK SC',sans-serif">★</text>
<text x="86.2" y="319.2" fill="#ff00ff" font-size="12" font-family="'Liberation Sans','Noto Sans CJK SC',sans-serif">抄底</text>
<text x="109.8" y="318.3" fill="#ff00ff" font-size="12" font-family="'Liberation Sans','Noto Sans CJK SC',sans-serif">: 0.00</text>
<text x="150.2" y="318.3" fill="#ffffff" font-size="12" font-family="'Liberation Sans','Noto Sans CJK SC',sans-serif">: 50.00</text>
<g shape-rendering="crispEdges">
<rect x="190.5" y="325.5" width="4" height="8" fill="none" stroke="#ff00ff" stroke-width="1"/>
<rect x="194.5" y="325.5" width="5" height="8" fill="none" stroke="#ff00ff" stroke-width="1"/>
<rect x="199.5" y="325.5" width="14" height="8" fill="none" stroke="#ff00ff" stroke-width="1"/>
<rect x="3" y="398" width="1" height="13" fill="#00ff00"/>
<rect x="8" y="398" width="1" height="13" fill="#00ff00"/>
<rect x="13" y="398" width="1" height="13" fill="#00ff00"/>
<rect x="18" y="398" width="1" height="13" fill="#00ff00"/>
<rect x="23" y="398" width="1" height="13" fill="#00ff00"/>
<rect x="27" y="398" width="1" height="13" fill="#00ff00"/>
<rect x="32" y="398" width="1" height="13" fill="#00ff00"/>
<rect x="37" y="398" width="1" height="13" fill="#00ff00"/>
<rect x="42" y="398" width="1" height="13" fill="#00ff00"/>
<rect x="47" y="398" width="1" height="13" fill="#00ff00"/>
<rect x="52" y="398" width="1" height="13" fill="#00ff00"/>
<rect x="56" y="398" width="1" height="13" fill="#00ff00"/>
<rect x="61" y="398" width="1" height="13" fill="#00ff00"/>
<rect x="66" y="398" width="1" height="13" fill="#00ff00"/>
<rect x="71" y="398" width="1" height="13" fill="#00ff00"/>
<rect x="76" y="398" width="1" height="13" fill="#00ff00"/>
<rect x="81" y="398" width="1" height="13" fill="#00ff00"/>
<rect x="85" y="398" width="1" height="13" fill="#00ff00"/>
<rect x="90" y="398" width="1" height="13" fill="#00ff00"/>
<rect x="95" y="398" width="1" height="13" fill="#00ff00"/>
<rect x="100" y="398" width="1" height="13" fill="#00ff00"/>
<rect x="105" y="398" width="1" height="13" fill="#00ff00"/>
<rect x="110" y="398" width="1" height="13" fill="#00ff00"/>
<rect x="114" y="398" width="1" height="13" fill="#00ff00"/>
<rect x="119" y="398" width="1" height="13" fill="#00ff00"/>
<rect x="124" y="398" width="1" height="13" fill="#00ff00"/>
<rect x="129" y="398" width="1" height="13" fill="#00ff00"/>
<rect x="134" y="398" width="1" height="13" fill="#00ff00"/>
<rect x="139" y="398" width="1" height="13" fill="#00ff00"/>
<rect x="143" y="398" width="1" height="13" fill="#00ff00"/>
<rect x="148" y="398" width="1" height="13" fill="#00ff00"/>
<rect x="153" y="398" width="1" height="13" fill="#00ff00"/>
<rect x="158" y="398" width="1" height="13" fill="#00ff00"/>
<rect x="163" y="398" width="1" height="13" fill="#00ff00"/>
<rect x="168" y="398" width="1" height="13" fill="#00ff00"/>
<rect x="172" y="398" width="1" height="13" fill="#00ff00"/>
<rect x="177" y="398" width="1" height="13" fill="#ff0000"/>
<rect x="182" y="398" width="1" height="13" fill="#ff0000"/>
<rect x="187" y="398" width="1" height="13" fill="#ff0000"/>
<rect x="192" y="398" width="1" height="13" fill="#ff0000"/>
<rect x="197" y="398" width="1" height="13" fill="#ff0000"/>
<rect x="201" y="398" width="1" height="13" fill="#ff0000"/>
<rect x="206" y="398" width="1" height="13" fill="#ff0000"/>
<rect x="211" y="398" width="1" height="13" fill="#ff0000"/>
<rect x="216" y="398" width="1" height="13" fill="#ff0000"/>
<rect x="221" y="398" width="1" height="13" fill="#ff0000"/>
<rect x="226" y="398" width="1" height="13" fill="#ff0000"/>
<rect x="230" y="398" width="1" height="13" fill="#ff0000"/>
<rect x="235" y="398" width="1" height="13" fill="#ff0000"/>
<rect x="240" y="398" width="1" height="13" fill="#ff0000"/>
<rect x="245" y="398" width="1" height="13" fill="#ff0000"/>
<rect x="250" y="398" width="1" height="13" fill="#ff0000"/>
<rect x="255" y="398" width="1" height="13" fill="#ff0000"/>
<rect x="259" y="398" width="1" height="13" fill="#ff0000"/>
<rect x="264" y="398" width="1" height="13" fill="#ff0000"/>
<rect x="269" y="398" width="1" height="13" fill="#ff0000"/>
<rect x="274" y="398" width="1" height="13" fill="#ff0000"/>
<rect x="279" y="398" width="1" height="13" fill="#ff0000"/>
<rect x="284" y="398" width="1" height="13" fill="#ff0000"/>
<rect x="288" y="398" width="1" height="13" fill="#ff0000"/>
<rect x="293" y="398" width="1" height="13" fill="#ff0000"/>
<rect x="298" y="398" width="1" height="13" fill="#ff0000"/>
<rect x="303" y="398" width="1" height="13" fill="#ff0000"/>
<rect x="308" y="398" width="1" height="13" fill="#ff0000"/>
<rect x="313" y="398" width="1" height="13" fill="#ff0000"/>
<rect x="317" y="398" width="1" height="13" fill="#ff0000"/>
<rect x="322" y="398" width="1" height="13" fill="#ff0000"/>
<rect x="327" y="398" width="1" height="13" fill="#ff0000"/>
<rect x="332" y="398" width="1" height="13" fill="#ff0000"/>
<rect x="337" y="398" width="1" height="13" fill="#ff0000"/>
<rect x="342" y="398" width="1" height="13" fill="#ff0000"/>
<rect x="346" y="398" width="1" height="13" fill="#ff0000"/>
<rect x="351" y="398" width="1" height="13" fill="#00ff00"/>
<rect x="356" y="398" width="1" height="13" fill="#00ff00"/>
<rect x="361" y="398" width="1" height="13" fill="#00ff00"/>
<rect x="366" y="398" width="1" height="13" fill="#00ff00"/>
<rect x="371" y="398" width="1" height="13" fill="#00ff00"/>
<rect x="375" y="398" width="1" height="13" fill="#00ff00"/>
<rect x="380" y="398" width="1" height="13" fill="#00ff00"/>
<rect x="385" y="398" width="1" height="13" fill="#00ff00"/>
<rect x="390" y="398" width="1" height="13" fill="#00ff00"/>
<rect x="395" y="398" width="1" height="13" fill="#00ff00"/>
<rect x="400" y="398" width="1" height="13" fill="#00ff00"/>
<rect x="404" y="398" width="1" height="13" fill="#00ff00"/>
<rect x="409" y="398" width="1" height="13" fill="#00ff00"/>
<rect x="414" y="398" width="1" height="13" fill="#00ff00"/>
<rect x="419" y="398" width="1" height="13" fill="#00ff00"/>
<rect x="424" y="398" width="1" height="13" fill="#00ff00"/>
<rect x="429" y="398" width="1" height="13" fill="#00ff00"/>
<rect x="433" y="398" width="1" height="13" fill="#00ff00"/>
<rect x="438" y="398" width="1" height="13" fill="#00ff00"/>
<rect x="443" y="398" width="1" height="13" fill="#00ff00"/>
<rect x="448" y="398" width="1" height="13" fill="#00ff00"/>
<rect x="453" y="398" width="1" height="13" fill="#00ff00"/>
<rect x="458" y="398" width="1" height="13" fill="#00ff00"/>
<rect x="462" y="398" width="1" height="13" fill="#00ff00"/>
<rect x="467" y="398" width="1" height="13" fill="#00ff00"/>
<rect x="472" y="398" width="1" height="13" fill="#00ff00"/>
<rect x="477" y="398" width="1" height="13" fill="#00ff00"/>
<rect x="482" y="398" width="1" height="13" fill="#00ff00"/>
<rect x="487" y="398" width="1" height="13" fill="#00ff00"/>
<rect x="491" y="398" width="1" height="13" fill="#00ff00"/>
<rect x="496" y="398" width="1" height="13" fill="#00ff00"/>
<rect x="501" y="398" width="1" height="13" fill="#00ff00"/>
<rect x="506" y="398" width="1" height="13" fill="#00ff00"/>
<rect x="511" y="398" width="1" height="13" fill="#00ff00"/>
<rect x="516" y="398" width="1" height="13" fill="#00ff00"/>
<rect x="520" y="398" width="1" height="13" fill="#00ff00"/>
<rect x="525" y="398" width="1" height="13" fill="#00ff00"/>
<rect x="530" y="398" width="1" height="13" fill="#00ff00"/>
<rect x="535" y="398" width="1" height="13" fill="#00ff00"/>
<rect x="540" y="398" width="1" height="13" fill="#00ff00"/>
<rect x="545" y="398" width="1" height="13" fill="#00ff00"/>
<rect x="549" y="398" width="1" height="13" fill="#00ff00"/>
<rect x="554" y="398" width="1" height="13" fill="#00ff00"/>
<rect x="559" y="398" width="1" height="13" fill="#00ff00"/>
<rect x="564" y="398" width="1" height="13" fill="#00ff00"/>
<rect x="569" y="398" width="1" height="13" fill="#00ff00"/>
<rect x="574" y="398" width="1" height="13" fill="#00ff00"/>
<rect x="578" y="398" width="1" height="13" fill="#00ff00"/>
<rect x="583" y="398" width="1" height="13" fill="#00ff00"/>
<rect x="588" y="398" width="1" height="13" fill="#00ff00"/>
<rect x="593" y="398" width="1" height="13" fill="#00ff00"/>
<rect x="598" y="398" width="1" height="13" fill="#00ff00"/>
<rect x="603" y="398" width="1" height="13" fill="#00ff00"/>
<rect x="607" y="398" width="1" height="13" fill="#00ff00"/>
<rect x="612" y="398" width="1" height="13" fill="#ff0000"/>
</g>
<polyline points="0.0,411.0 2.5,401.2 4.9,398.8 9.8,397.2 14.7,398.8 18.0,400.4 22.9,397.5 27.8,398.8 31.9,401.2 37.6,391.1 42.5,399.6 47.4,411.0 51.5,418.0 56.4,417.5 61.3,423.2 66.2,426.5 72.0,437.5 76.8,447.3 80.0,452.6 85.8,458.3 89.9,456.5 94.8,461.5 96.5,462.3 104.7,465.6 106.3,459.0 109.6,449.2 119.4,446.8 130.8,441.0 137.4,443.5 147.2,449.2 152.0,450.4 158.6,450.4 161.9,443.5 164.3,431.2 166.8,419.8 169.4,411.0 172.0,398.6 175.3,390.5 178.6,380.7 182.7,373.3 187.6,373.3 193.3,361.0 200.7,349.6 206.4,348.3 212.0,357.0 217.0,363.5 221.9,368.4 230.0,372.5 235.0,366.8 241.5,369.3 249.8,372.2 259.6,373.5 269.4,378.4 274.3,377.6 282.5,382.2 288.2,383.3 290.7,389.0 294.0,398.8 298.0,411.0 303.5,415.2 307.8,406.0 312.8,389.0 316.5,388.4 321.2,393.9 323.3,397.2 326.0,402.9 328.2,408.6 332.7,417.6 334.8,420.0 339.5,432.5 345.0,442.7 349.8,446.3 356.3,447.5 362.9,454.0 369.4,458.7 376.8,461.5 384.0,459.8 392.3,454.0 397.2,449.2 401.3,447.3 405.4,450.0 410.3,450.0 414.3,448.4 419.2,450.0 423.3,446.8 425.0,444.3 428.2,441.0 433.1,433.7 438.0,436.0 443.0,446.0 447.9,454.0 452.8,460.7 458.5,462.3 464.2,467.2 468.3,469.6 472.4,468.0 479.0,469.6 487.0,471.3 492.8,473.0 500.0,475.0 510.0,475.0 518.6,472.4 533.3,472.4 541.5,465.6 548.0,461.0 553.8,461.5 557.8,456.6 561.0,450.3 562.5,447.0 564.0,436.5 567.7,431.0 569.3,429.0 572.8,420.5 575.8,410.0 579.0,403.2 583.2,401.0 588.0,405.2 593.0,408.5 597.9,399.0 602.8,389.3 607.7,387.3 611.8,374.0 617.0,369.2" fill="none" stroke="#ffff00" stroke-width="1.0" stroke-linejoin="round" shape-rendering="crispEdges"/>
<polyline points="0.0,481.5 114.1,481.5 115.0,476.0 119.4,434.5 123.8,476.0 124.7,481.5 158.2,481.5 159.1,476.0 163.5,434.5 167.9,476.0 168.8,481.5 419.2,481.5 420.1,476.0 424.5,434.5 428.9,476.0 429.8,481.5 617.0,481.5" fill="none" stroke="#ff00ff" stroke-width="1.0" stroke-linejoin="round" shape-rendering="crispEdges"/>
<g shape-rendering="crispEdges">
<rect x="0" y="481" width="617" height="1" fill="#ff00ff"/>
<rect x="6" y="479" width="5" height="4" fill="#ffffff"/>
<rect x="50" y="479" width="5" height="4" fill="#ffffff"/>
<rect x="93" y="479" width="5" height="4" fill="#ffffff"/>
<rect x="137" y="479" width="5" height="4" fill="#ffffff"/>
<rect x="180" y="479" width="5" height="4" fill="#ffffff"/>
<rect x="224" y="479" width="5" height="4" fill="#ffffff"/>
<rect x="267" y="479" width="5" height="4" fill="#ffffff"/>
<rect x="311" y="479" width="5" height="4" fill="#ffffff"/>
<rect x="354" y="479" width="5" height="4" fill="#ffffff"/>
<rect x="398" y="479" width="5" height="4" fill="#ffffff"/>
<rect x="441" y="479" width="5" height="4" fill="#ffffff"/>
<rect x="485" y="479" width="5" height="4" fill="#ffffff"/>
<rect x="528" y="479" width="5" height="4" fill="#ffffff"/>
<rect x="572" y="479" width="5" height="4" fill="#ffffff"/>
<rect x="615" y="479" width="5" height="4" fill="#ffffff"/>
<rect x="78.5" y="473.5" width="10" height="8" fill="#000" stroke="#ff00ff" stroke-width="1"/>
<rect x="88.5" y="473.5" width="6" height="8" fill="#000" stroke="#ff00ff" stroke-width="1"/>
<rect x="94.5" y="473.5" width="4" height="8" fill="#000" stroke="#ff00ff" stroke-width="1"/>
<rect x="98.5" y="473.5" width="15" height="8" fill="#000" stroke="#ff00ff" stroke-width="1"/>
<rect x="359.5" y="473.5" width="5" height="8" fill="#000" stroke="#ff00ff" stroke-width="1"/>
<rect x="364.5" y="473.5" width="5" height="8" fill="#000" stroke="#ff00ff" stroke-width="1"/>
<rect x="369.5" y="473.5" width="5" height="8" fill="#000" stroke="#ff00ff" stroke-width="1"/>
<rect x="374.5" y="473.5" width="5" height="8" fill="#000" stroke="#ff00ff" stroke-width="1"/>
<rect x="379.5" y="473.5" width="14" height="8" fill="#000" stroke="#ff00ff" stroke-width="1"/>
<rect x="441.5" y="473.5" width="5" height="8" fill="#000" stroke="#ff00ff" stroke-width="1"/>
<rect x="446.5" y="473.5" width="5" height="8" fill="#000" stroke="#ff00ff" stroke-width="1"/>
<rect x="451.5" y="473.5" width="5" height="8" fill="#000" stroke="#ff00ff" stroke-width="1"/>
<rect x="456.5" y="473.5" width="5" height="8" fill="#000" stroke="#ff00ff" stroke-width="1"/>
<rect x="461.5" y="473.5" width="4" height="8" fill="#000" stroke="#ff00ff" stroke-width="1"/>
<rect x="465.5" y="473.5" width="5" height="8" fill="#000" stroke="#ff00ff" stroke-width="1"/>
<rect x="470.5" y="473.5" width="5" height="8" fill="#000" stroke="#ff00ff" stroke-width="1"/>
<rect x="475.5" y="473.5" width="5" height="8" fill="#000" stroke="#ff00ff" stroke-width="1"/>
<rect x="480.5" y="473.5" width="5" height="8" fill="#000" stroke="#ff00ff" stroke-width="1"/>
<rect x="485.5" y="473.5" width="5" height="8" fill="#000" stroke="#ff00ff" stroke-width="1"/>
<rect x="490.5" y="473.5" width="4" height="8" fill="#000" stroke="#ff00ff" stroke-width="1"/>
<rect x="494.5" y="473.5" width="5" height="8" fill="#000" stroke="#ff00ff" stroke-width="1"/>
<rect x="499.5" y="473.5" width="5" height="8" fill="#000" stroke="#ff00ff" stroke-width="1"/>
<rect x="504.5" y="473.5" width="5" height="8" fill="#000" stroke="#ff00ff" stroke-width="1"/>
<rect x="509.5" y="473.5" width="5" height="8" fill="#000" stroke="#ff00ff" stroke-width="1"/>
<rect x="514.5" y="473.5" width="5" height="8" fill="#000" stroke="#ff00ff" stroke-width="1"/>
<rect x="519.5" y="473.5" width="4" height="8" fill="#000" stroke="#ff00ff" stroke-width="1"/>
<rect x="523.5" y="473.5" width="5" height="8" fill="#000" stroke="#ff00ff" stroke-width="1"/>
<rect x="528.5" y="473.5" width="5" height="8" fill="#000" stroke="#ff00ff" stroke-width="1"/>
<rect x="533.5" y="473.5" width="5" height="8" fill="#000" stroke="#ff00ff" stroke-width="1"/>
<rect x="538.5" y="473.5" width="15" height="8" fill="#000" stroke="#ff00ff" stroke-width="1"/>
<rect x="0" y="484" width="617" height="1" fill="#b80000"/>
</g>
<circle cx="175.3" cy="387.6" r="2.9" fill="#ff0000"/>
<text x="178.0" y="392.0" fill="#ff0000" font-size="12" font-family="'Liberation Sans','Noto Sans CJK SC',sans-serif">关注</text>
<circle cx="470.5" cy="387.5" r="2.9" fill="#ff0000"/>
<text x="473.0" y="391.7" fill="#ff0000" font-size="12" font-family="'Liberation Sans','Noto Sans CJK SC',sans-serif">关注</text>
<text x="167.7" y="430.9" fill="#ff0000" font-size="10" font-family="'Liberation Sans','Noto Sans CJK SC',sans-serif">★</text>
<text x="177.4" y="430.5" fill="#ff0000" font-size="12" font-family="'Liberation Sans','Noto Sans CJK SC',sans-serif">追涨</text>
<text x="545.4" y="430.9" fill="#ff0000" font-size="10" font-family="'Liberation Sans','Noto Sans CJK SC',sans-serif">★</text>
<text x="555.4" y="430.5" fill="#ff0000" font-size="12" font-family="'Liberation Sans','Noto Sans CJK SC',sans-serif">追涨</text>
<text x="471.8" y="454" fill="#ffff00" font-size="13" font-family="'Liberation Sans','Noto Sans CJK SC',sans-serif">*</text>
<text x="476.0" y="454.8" fill="#ffff00" font-size="12" font-family="'Liberation Sans','Noto Sans CJK SC',sans-serif">大底</text>
<text x="540.1" y="454" fill="#ffff00" font-size="13" font-family="'Liberation Sans','Noto Sans CJK SC',sans-serif">*</text>
<text x="544.0" y="454.5" fill="#ffff00" font-size="12" font-family="'Liberation Sans','Noto Sans CJK SC',sans-serif">大底</text>
<text x="205.8" y="482.8" fill="#ffffff" font-size="14" font-family="'Liberation Sans','Noto Sans CJK SC',sans-serif">*</text>
<text x="0" y="497" fill="#ffffff" font-size="12" font-family="'Liberation Sans','Noto Sans CJK SC',sans-serif">0.0)</text>
<text x="24.5" y="497" fill="#ffffff" font-size="12" font-family="'Liberation Sans','Noto Sans CJK SC',sans-serif">DIF: 0.00</text>
<text x="83.5" y="497" fill="#ffff00" font-size="12" font-family="'Liberation Sans','Noto Sans CJK SC',sans-serif">DEA: 0.44</text>
<text x="146.5" y="497" fill="#ff00ff" font-size="12" font-family="'Liberation Sans','Noto Sans CJK SC',sans-serif">MACD: 0.01</text>
</svg>
</body></html>
